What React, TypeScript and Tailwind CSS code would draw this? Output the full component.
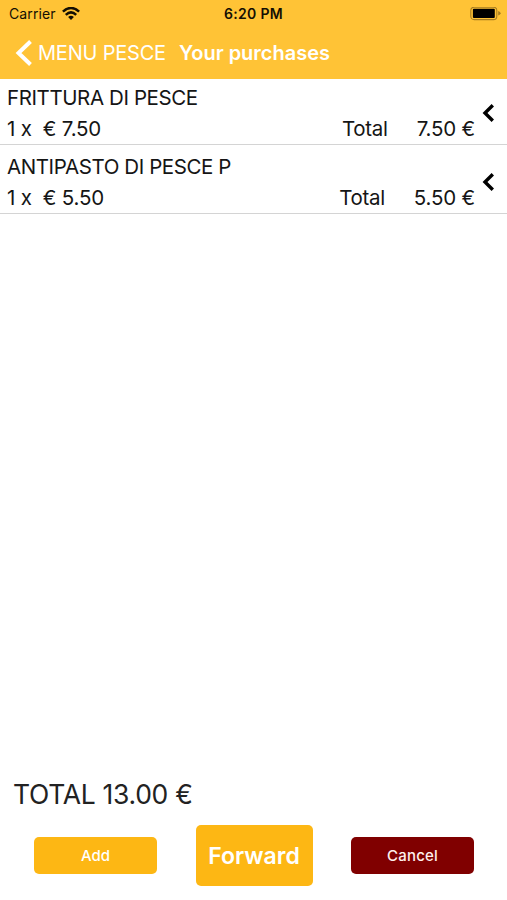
interface Purchase {
    id: number;
    name: string;
    quantity: number;
    price: string;
    total: string;
}

const purchases: Purchase[] = [
    { id: 1, name: 'FRITTURA DI PESCE', quantity: 1, price: '7.50', total: '7.50' },
    { id: 2, name: 'ANTIPASTO DI PESCE P', quantity: 1, price: '5.50', total: '5.50' },
];

const WifiIcon = () => (
    <svg className="w-[18px] h-[14px]" viewBox="0 0 18 14" fill="none" stroke="#140f03" strokeWidth="2.5">
        <path d="M0.9 4.7 Q9 -2.7 17.1 4.7" />
        <path d="M3.8 7.8 Q9 2.9 14.2 7.8" />
        <path d="M9 12.9 L6.1 10.1 Q9 7.5 11.9 10.1 Z" fill="#140f03" stroke="none" />
    </svg>
);

const BatteryIcon = () => (
    <svg className="w-[31px] h-[14px]" viewBox="0 0 31 14" fill="none">
        <rect x="0.8" y="0.2" width="26" height="12.4" rx="3.4" stroke="#a67d22" strokeWidth="1.1" />
        <rect x="2.9" y="1.8" width="21.9" height="9.2" rx="1" fill="#000" />
        <path d="M28.2 4 Q30.6 4.8 30.6 6.3 Q30.6 7.8 28.2 8.6 Z" fill="#a67d22" />
    </svg>
);

const StatusBar = () => (
    <div className="grid grid-cols-3 items-center h-[27px] pl-[9px] pr-[6px] text-[14px] text-[#140f03]">
        <div className="flex items-center gap-[6px]">
            <span className="tracking-[0.1px]">Carrier</span>
            <WifiIcon />
        </div>
        <span className="-ml-[3px] text-center font-semibold tracking-[0.3px]">6:20 PM</span>
        <div className="flex justify-end">
            <BatteryIcon />
        </div>
    </div>
);

const PurchaseRow = ({ purchase }: { purchase: Purchase }) => (
    <li className="flex pt-[6px] first:pt-[3px] pl-[7px] pr-3 h-[69px] first:h-[66px] border-b border-[#d4d4d4]">
        <div className="flex-1 leading-[31px]">
            <p className="text-[20.5px] tracking-[-0.4px]">{purchase.name}</p>
            <div className="flex text-[20.5px] tracking-[-0.2px]">
                <span className="flex-1 whitespace-pre">{`${purchase.quantity} x  € ${purchase.price}`}</span>
                <span className="mr-[29px] tracking-[-0.3px]">Total</span>
                <span>{purchase.total} €</span>
            </div>
        </div>
        <svg
            className="w-[13px] h-5 ml-[7px] mt-[21px]"
            viewBox="0 0 13 20"
            fill="none"
            stroke="#000"
            strokeWidth="3.4"
        >
            <path d="M10.8 2.3 L3 10 L10.8 17.7" />
        </svg>
    </li>
);

const App = () => {
    return (
        <div className="flex flex-col h-screen bg-white text-[20px] text-[#151515] overflow-hidden font-['Inter',sans-serif]">
            <header className="h-[79px] shrink-0 bg-[#ffc336]">
                <StatusBar />
                <div className="flex items-center h-[51px] pl-[15px] text-white">
                    <svg className="w-[18px] h-[26px] mr-[5px]" viewBox="0 0 18 26" fill="none" stroke="#fff" strokeWidth="4">
                        <path d="M15.5 1.5 L3.5 13 L15.5 24.5" />
                    </svg>
                    <span className="mr-[13px] tracking-[-0.2px]">MENU PESCE</span>
                    <h1 className="font-semibold tracking-[0px]">Your purchases</h1>
                </div>
            </header>

            <ul className="flex-1">
                {purchases.map((purchase) => (
                    <PurchaseRow key={purchase.id} purchase={purchase} />
                ))}
            </ul>

            <footer className="shrink-0">
                <p className="pl-[13px] text-[26.5px] leading-8 mb-[15px] tracking-[-0.3px] text-[#222]">TOTAL 13.00 €</p>
                <div className="flex items-center justify-between pl-[34px] pr-[33px] mb-[14px] text-white">
                    <button className="w-[123px] h-[37px] pt-px rounded-[5px] bg-[#fdb714] text-[15px] font-medium">Add</button>
                    <button className="w-[117px] h-[61px] pt-px rounded-[5px] bg-[#fdb714] text-[23px] font-semibold">Forward</button>
                    <button className="w-[123px] h-[37px] pt-px rounded-[5px] bg-[#800000] text-[15px] font-medium tracking-[0.2px] text-[#fff0ee]">Cancel</button>
                </div>
            </footer>
        </div>
    );
};

export default App;
